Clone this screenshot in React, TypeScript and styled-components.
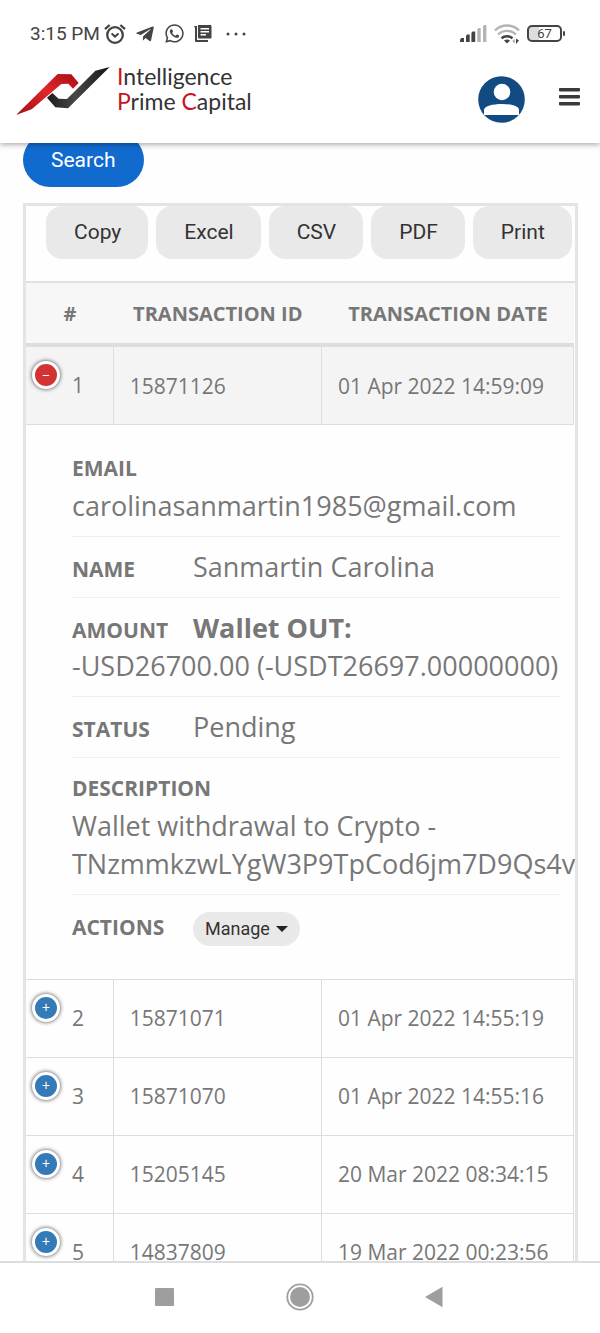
import React, { useState } from "react";
import styled, { createGlobalStyle } from "styled-components";
import { FaTelegramPlane, FaWhatsapp } from "react-icons/fa";

const sans = `"Open Sans", "Noto Sans", sans-serif`;
const roboto = `Roboto, "Liberation Sans", sans-serif`;

const GlobalStyle = createGlobalStyle`
  *, *::before, *::after { box-sizing: border-box; }
  body { margin: 0; background: #fefefe; color: #777; font-family: ${sans}; }
  button { border: 0; padding: 0; font: inherit; color: inherit; background: none; cursor: pointer; }
`;

const Screen = styled.div`
  display: flex;
  flex-direction: column;
  height: 100vh;
  overflow: hidden;
`;

const Header = styled.header`
  position: relative;
  z-index: 1;
  flex: none;
  background: #fff;
  box-shadow: 0 1px 6px rgba(0, 0, 0, 0.4);
`;

const StatusBar = styled.div`
  display: flex;
  align-items: center;
  justify-content: space-between;
  height: 67px;
  padding: 0 35px 0 30px;
  color: #444;
  font: 400 19px ${roboto};
`;

const StatusGroup = styled.div<{ $gap: number }>`
  display: flex;
  align-items: center;
  gap: ${(p) => p.$gap}px;
  svg { display: block; flex: none; }
`;

const Clock = styled.span`
  margin-right: -5px;
`;

const Battery = styled.div`
  display: flex;
  align-items: center;
  gap: 1px;
  &::after {
    content: "";
    width: 2px;
    height: 5px;
    border-radius: 1px;
    background: #444;
  }
`;

const BatteryLevel = styled.span`
  width: 35px;
  height: 17px;
  border: 2px solid #444;
  border-radius: 5px;
  background: linear-gradient(to right, #ddd 10px, #fff 10px);
  font: 400 13px/13px ${roboto};
  text-align: center;
`;

const BrandBar = styled.div`
  display: flex;
  align-items: center;
  justify-content: space-between;
  height: 76px;
  padding: 0 20px 12px 16px;
`;

const Brand = styled.a`
  display: flex;
  align-items: flex-start;
  align-self: flex-start;
  gap: 7px;
  color: #333;
  text-decoration: none;
  svg { display: block; }
`;

const BrandName = styled.span`
  margin-top: -3px;
  font: 400 23px/25px Lato, sans-serif;
  em { color: #c4161c; font-style: normal; }
`;

const HeaderActions = styled.div`
  display: flex;
  align-items: center;
  gap: 34px;
  svg { display: block; }
`;

const MenuButton = styled.button`
  padding-bottom: 5px;
`;

const Main = styled.main`
  flex: 1;
  min-height: 0;
  padding: 0 22px 0 23px;
  overflow: hidden;
`;

const SearchButton = styled.button`
  display: block;
  height: 54px;
  margin-top: -10px;
  padding: 0 28px;
  border-radius: 27px;
  background: #116bcf;
  color: #fff;
  font: 400 21px ${roboto};
`;

const Panel = styled.section`
  margin-top: 16px;
  border: 3px solid #e4e4e4;
  overflow: hidden;
`;

const ExportBar = styled.div`
  display: flex;
  gap: 8px;
  padding: 0 0 22px 20px;
`;

const ExportButton = styled.button`
  flex: none;
  height: 53px;
  padding: 0 27px 2px 28px;
  border-radius: 16px;
  background: #e9e9e9;
  color: #333;
  font: 400 21px ${roboto};
`;

const Table = styled.table`
  width: 100%;
  table-layout: fixed;
  border-collapse: separate;
  border-spacing: 0;
  border-top: 2px solid #e0e0e0;
  padding-right: 1px;
  font-size: 21px;
`;

const HeadCell = styled.th`
  height: 64px;
  padding: 0;
  border-bottom: 4px solid #ddd;
  background: #f7f7f7;
  font-size: 20px;
  font-weight: 700;
  text-transform: uppercase;
  white-space: nowrap;
`;

const Cell = styled.td<{ $open?: boolean }>`
  padding: 0 0 0 16px;
  border-right: 1px solid #ddd;
  border-bottom: 1px solid #ddd;
  background: ${(p) => (p.$open ? "#f4f4f4" : "transparent")};
  white-space: nowrap;
`;

const IndexCell = styled(Cell)`
  padding: 14px 0 15px 6px;
`;

const IndexContent = styled.div`
  display: flex;
  align-items: flex-start;
  gap: 12px;
  line-height: 48px;
`;

const Toggle = styled.button<{ $open: boolean }>`
  flex: none;
  width: 28px;
  height: 28px;
  border: 3px solid #fff;
  border-radius: 50%;
  background: ${(p) => (p.$open ? "#d33333" : "#337ab7")};
  box-shadow: 0 0 4px #444;
  color: #fff;
  font: 400 14px/22px "Liberation Mono", monospace;
  text-align: center;
`;

const DetailCell = styled.td`
  padding: 13px 14px 22px 46px;
  border-bottom: 1px solid #ddd;
`;

const DetailList = styled.ul`
  margin: 0;
  padding: 0;
  list-style: none;
`;

const DetailItem = styled.li`
  padding: 11px 0;
  font-size: 27px;
  line-height: 38px;
  & + & { border-top: 1px solid #efefef; }
`;

const DetailTitle = styled.span<{ $stacked?: boolean }>`
  display: ${(p) => (p.$stacked ? "block" : "inline-block")};
  min-width: 121px;
  font-size: 21px;
  font-weight: 700;
  line-height: ${(p) => (p.$stacked ? 38 : 28)}px;
  text-transform: uppercase;
`;

const ManageButton = styled.button`
  display: inline-flex;
  align-items: center;
  gap: 6px;
  height: 34px;
  padding: 0 12px;
  border-radius: 17px;
  background: #e9e9e9;
  color: #333;
  font: 400 18px ${roboto};
  &::after {
    content: "";
    border: 6px solid transparent;
    border-top-color: #222;
    border-bottom: 0;
  }
`;

const SystemNav = styled.nav`
  display: flex;
  flex: none;
  align-items: center;
  justify-content: center;
  gap: 107px;
  height: 72px;
  padding-bottom: 2px;
  border-top: 2px solid #ddd;
  background: #fff;
  color: #9e9e9e;
  svg { display: block; }
`;

const AlarmIcon = () => (
  <svg width="22" height="20" viewBox="0 0 22 20" fill="none" stroke="#444" strokeWidth="2">
    <circle cx="11" cy="11" r="7.8" strokeWidth="2.3" />
    <path d="M1 5.2 5.6 1M21 5.2 16.400 1" strokeWidth="2.300" />
    <path d="m7.600 9.600 3.400 3 3.600-3" />
  </svg>
);

const NewsIcon = () => (
  <svg width="18" height="18" viewBox="0 0 18 18" fill="#444">
    <path d="M0 1h3v14h11v2H2a1 1 0 0 1-1-1V3z" />
    <path fillRule="evenodd" d="M4 0h12.500a1 1 0 0 1 1 1v11.500a1 1 0 0 1-1 1H5a1 1 0 0 1-1-1zm2.500 3v1.400h8.500V3zm0 3v1.400h8.500V6zm0 3v1.400h5.500V9z" />
  </svg>
);

const DotsIcon = () => (
  <svg width="20" height="4" viewBox="0 0 20 4" fill="#444">
    <circle cx="2" cy="2" r="1.500" />
    <circle cx="10" cy="2" r="1.500" />
    <circle cx="18" cy="2" r="1.500" />
  </svg>
);

const SignalIcon = () => (
  <svg width="27" height="17" viewBox="0 0 27 17">
    <path fill="#444" d="M0 17v-2l1-2h3v4zM6 17v-6l1-1.500h2.700V17zM11.400 17V8l1-1.500h2.800V17z" />
    <path fill="#b4b4b4" d="M17.300 17V4.500l1-1.500h2.400v14zM23 17V1.500L24 0h2.400v17z" />
  </svg>
);

const WifiIcon = () => (
  <svg width="26" height="20" viewBox="0 0 26 20" fill="none">
    <path d="M1 6.500a17 17 0 0 1 24 0" stroke="#b4b4b4" strokeWidth="2.400" />
    <path d="M4 10.500a13 13 0 0 1 18 0" stroke="#b4b4b4" strokeWidth="2.400" />
    <path d="M7.500 14.200a8.500 8.500 0 0 1 11 0" stroke="#444" strokeWidth="2.600" />
    <path d="M10 16.600a5 5 0 0 1 6 0l-3 2.900z" fill="#444" />
    <path d="M21 15v4.500l-3-2.500z" fill="#b4b4b4" />
    <path d="M22 14.500v5.500l3-3.500z" fill="#444" />
  </svg>
);

const LogoMark = () => (
  <svg width="94" height="49" viewBox="48 202 282 147">
    <defs>
      <linearGradient id="red" x1="0" y1="1" x2="1" y2="0">
        <stop offset="0" stopColor="#a31218" />
        <stop offset="0.550" stopColor="#e0252b" />
        <stop offset="1" stopColor="#a80d12" />
      </linearGradient>
      <linearGradient id="dark" x1="0" y1="0" x2="1" y2="0">
        <stop offset="0" stopColor="#1c1c1c" />
        <stop offset="0.450" stopColor="#484848" />
        <stop offset="1" stopColor="#151515" />
      </linearGradient>
    </defs>
    <path fill="url(#red)" d="M48 346 173 223 214 224 236 250 219 267 205 252 184 253 95 329z" />
    <path fill="url(#dark)" d="M329 202 286 213 201 298 176 297 157 280 141 294 166 323 204 326z" />
  </svg>
);

const AvatarIcon = () => (
  <svg width="47" height="47" viewBox="0 0 47 47">
    <circle cx="23.500" cy="23.500" r="23.300" fill="#124a82" />
    <circle cx="24" cy="16" r="8.300" fill="#fff" />
    <path fill="#fff" d="M6 39v-5c0-4 9-6 18-6s17 2 17 6v5z" />
  </svg>
);

const MenuIcon = () => (
  <svg width="21" height="18" viewBox="0 0 21 18" fill="#3a3a3a">
    <rect width="21" height="3.400" rx="0.800" />
    <rect y="7" width="21" height="3.400" rx="0.800" />
    <rect y="14" width="21" height="3.400" rx="0.800" />
  </svg>
);

const transactions = [
  { id: "15871126", date: "01 Apr 2022 14:59:09" },
  { id: "15871071", date: "01 Apr 2022 14:55:19" },
  { id: "15871070", date: "01 Apr 2022 14:55:16" },
  { id: "15205145", date: "20 Mar 2022 08:34:15" },
  { id: "14837809", date: "19 Mar 2022 00:23:56" },
];

const Details = () => (
  <tr>
    <DetailCell colSpan={3}>
      <DetailList>
        <DetailItem>
          <DetailTitle $stacked>Email</DetailTitle>
          carolinasanmartin1985@gmail.com
        </DetailItem>
        <DetailItem>
          <DetailTitle>Name</DetailTitle>
          Sanmartin Carolina
        </DetailItem>
        <DetailItem>
          <DetailTitle>Amount</DetailTitle>
          <b>Wallet OUT:</b>
          <br />
          -USD26700.00 (-USDT26697.00000000)
        </DetailItem>
        <DetailItem>
          <DetailTitle>Status</DetailTitle>
          Pending
        </DetailItem>
        <DetailItem>
          <DetailTitle $stacked>Description</DetailTitle>
          Wallet withdrawal to Crypto - TNzmmkzwLYgW3P9TpCod6jm7D9Qs4v1
        </DetailItem>
        <DetailItem>
          <DetailTitle>Actions</DetailTitle>
          <ManageButton type="button">Manage</ManageButton>
        </DetailItem>
      </DetailList>
    </DetailCell>
  </tr>
);

export default function App() {
  const [openRow, setOpenRow] = useState<number | null>(0);

  return (
    <Screen>
      <GlobalStyle />
      <Header>
        <StatusBar>
          <StatusGroup $gap={9}>
            <Clock>3:15 PM</Clock>
            <AlarmIcon />
            <FaTelegramPlane size={20} />
            <FaWhatsapp size={21} />
            <NewsIcon />
            <StatusGroup $gap={0}>
              &nbsp;
              <DotsIcon />
            </StatusGroup>
          </StatusGroup>
          <StatusGroup $gap={7}>
            <SignalIcon />
            <WifiIcon />
            <Battery>
              <BatteryLevel>67</BatteryLevel>
            </Battery>
          </StatusGroup>
        </StatusBar>
        <BrandBar>
          <Brand href="#">
            <LogoMark />
            <BrandName>
              <em>I</em>ntelligence
              <br />
              <em>P</em>rime <em>C</em>apital
            </BrandName>
          </Brand>
          <HeaderActions>
            <button type="button" aria-label="Account">
              <AvatarIcon />
            </button>
            <MenuButton type="button" aria-label="Menu">
              <MenuIcon />
            </MenuButton>
          </HeaderActions>
        </BrandBar>
      </Header>

      <Main>
        <SearchButton type="button">Search</SearchButton>
        <Panel>
          <ExportBar>
            {["Copy", "Excel", "CSV", "PDF", "Print"].map((label) => (
              <ExportButton key={label} type="button">
                {label}
              </ExportButton>
            ))}
          </ExportBar>
          <Table>
            <colgroup>
              <col style={{ width: "16%" }} />
              <col style={{ width: "38%" }} />
              <col />
            </colgroup>
            <thead>
              <tr>
                <HeadCell>#</HeadCell>
                <HeadCell>Transaction ID</HeadCell>
                <HeadCell>Transaction Date</HeadCell>
              </tr>
            </thead>
            <tbody>
              {transactions.map((row, i) => {
                const open = openRow === i;
                return (
                  <React.Fragment key={row.id}>
                    <tr>
                      <IndexCell $open={open}>
                        <IndexContent>
                          <Toggle
                            type="button"
                            $open={open}
                            aria-expanded={open}
                            onClick={() => setOpenRow(open ? null : i)}
                          >
                            {open ? "–" : "+"}
                          </Toggle>
                          {i + 1}
                        </IndexContent>
                      </IndexCell>
                      <Cell $open={open}>{row.id}</Cell>
                      <Cell $open={open}>{row.date}</Cell>
                    </tr>
                    {open && <Details />}
                  </React.Fragment>
                );
              })}
            </tbody>
          </Table>
        </Panel>
      </Main>

      <SystemNav aria-label="System">
        <button type="button" aria-label="Recent apps">
          <svg width="28" height="28" viewBox="0 0 28 28" fill="currentColor">
            <rect x="4" y="5" width="19" height="18" rx="1" />
          </svg>
        </button>
        <button type="button" aria-label="Home">
          <svg width="28" height="28" viewBox="0 0 28 28" fill="currentColor">
            <circle cx="14" cy="14" r="12.700" fill="none" stroke="currentColor" strokeWidth="1.800" />
            <circle cx="14" cy="14" r="10" />
          </svg>
        </button>
        <button type="button" aria-label="Back">
          <svg width="28" height="28" viewBox="0 0 28 28" fill="currentColor">
            <path d="M4 14 21.500 3.800v20.400z" />
          </svg>
        </button>
      </SystemNav>
    </Screen>
  );
}
